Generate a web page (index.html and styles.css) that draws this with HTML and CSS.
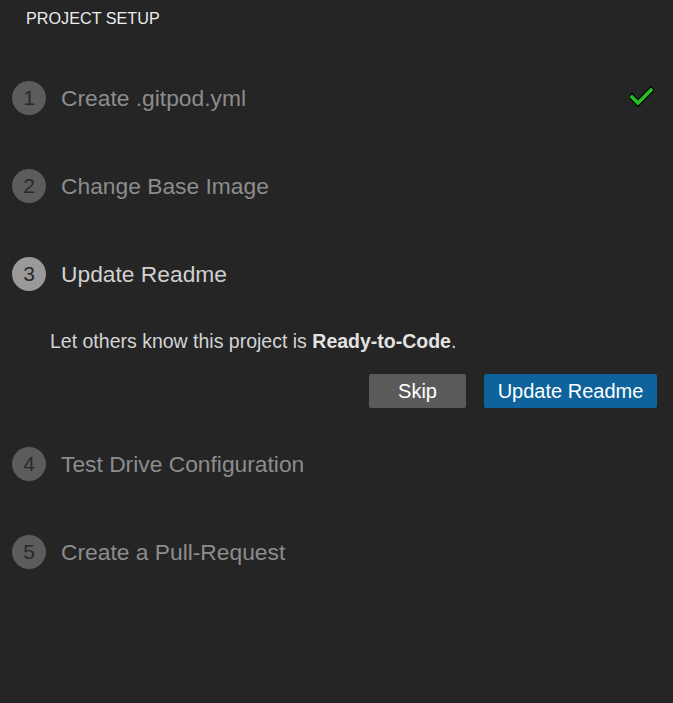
FILE: index.html
```html
<!DOCTYPE html>
<html>
<head>
<meta charset="utf-8">
<link rel="stylesheet" href="styles.css">
</head>
<body>
<div class="panel">
  <div class="header">PROJECT SETUP</div>
  <div class="steps">
    <div class="step done">
      <div class="step-head">
        <span class="num">1</span>
        <span class="title">Create .gitpod.yml</span>
        <svg class="check" width="24" height="22" viewBox="0 0 24 22">
          <polyline points="2,11 8,17 21,4" fill="none" stroke="#000" stroke-width="6" stroke-linecap="square"/>
          <polyline points="2,11 8,17 21,4" fill="none" stroke="#22c322" stroke-width="3.4" stroke-linecap="square"/>
        </svg>
      </div>
    </div>
    <div class="step">
      <div class="step-head">
        <span class="num">2</span>
        <span class="title">Change Base Image</span>
      </div>
    </div>
    <div class="step active">
      <div class="step-head">
        <span class="num">3</span>
        <span class="title">Update Readme</span>
      </div>
      <div class="step-body">
        <p class="desc">Let others know this project is <b>Ready-to-Code</b>.</p>
        <div class="actions">
          <button class="btn btn-secondary">Skip</button>
          <button class="btn btn-primary">Update Readme</button>
        </div>
      </div>
    </div>
    <div class="step">
      <div class="step-head">
        <span class="num">4</span>
        <span class="title">Test Drive Configuration</span>
      </div>
    </div>
    <div class="step">
      <div class="step-head">
        <span class="num">5</span>
        <span class="title">Create a Pull-Request</span>
      </div>
    </div>
  </div>
</div>
</body>
</html>
```
FILE: styles.css
```css
html, body {
  margin: 0;
  padding: 0;
  background: #252526;
}
body {
  font-family: "Liberation Sans", Arial, sans-serif;
  color: #cccccc;
  width: 673px;
  height: 703px;
  overflow: hidden;
}
.panel {
  display: flex;
  flex-direction: column;
}
.header {
  height: 54px;
  box-sizing: border-box;
  padding: 9px 0 0 26px;
  font-size: 16.2px;
  line-height: 18px;
  color: #ececec;
}
.steps {
  display: flex;
  flex-direction: column;
}
.step {
  padding: 27px 16px 27px 12px;
}
.step.active {
  padding-bottom: 12px;
}
.step-head {
  display: flex;
  align-items: center;
  height: 34px;
}
.num {
  width: 34px;
  height: 34px;
  border-radius: 50%;
  background: #5c5c5c;
  color: #2a2a2a;
  font-size: 21px;
  line-height: 34px;
  text-align: center;
  flex: none;
}
.title {
  margin-left: 15px;
  font-size: 22.8px;
  color: #8c8c8c;
  flex: 1;
}
.active .num {
  background: #9a9a9a;
  color: #2b2b2b;
}
.active .title {
  color: #d0d0d0;
}
.check {
  display: block;
  margin-right: 3px;
  margin-top: -3px;
}
.step-body {
  margin-top: 40px;
}
.desc {
  margin: 0 0 0 38px;
  font-size: 19.5px;
  line-height: 20px;
  color: #d4d4d4;
}
.desc b {
  color: #e2e2e2;
}
.actions {
  display: flex;
  justify-content: flex-end;
  gap: 18px;
  margin-top: 23px;
}
.btn {
  height: 34px;
  border: none;
  border-radius: 2px;
  font-family: "Liberation Sans", Arial, sans-serif;
  font-size: 20px;
  color: #ffffff;
  padding: 0;
  white-space: nowrap;
  text-align: center;
  cursor: pointer;
}
.btn-secondary {
  background: #5a5a5a;
  width: 97px;
}
.btn-primary {
  background: #0e639c;
  width: 173px;
}
```
